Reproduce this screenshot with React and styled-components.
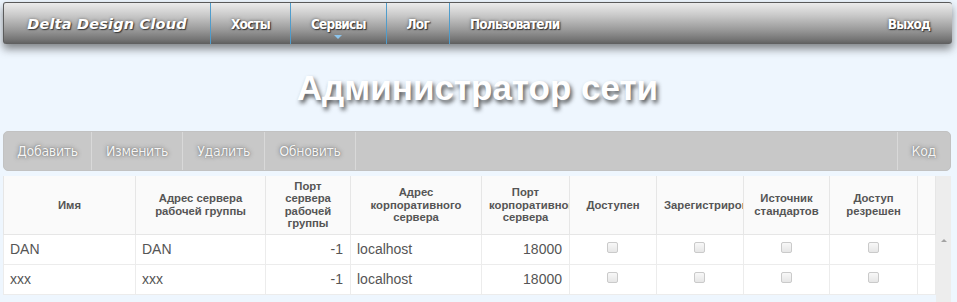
import React from "react";
import styled, { createGlobalStyle } from "styled-components";

const Global = createGlobalStyle`
  html, body { margin: 0; padding: 0; background: #eef6fe; }
  body { font-family: "Liberation Sans", Arial, sans-serif; }
  * { box-sizing: border-box; }
`;

const Page = styled.div`
  padding: 2px 5px 0 3px;
  height: 302px;
  overflow: hidden;
`;

const NavBar = styled.nav`
  position: relative;
  display: flex;
  align-items: stretch;
  height: 42px;
  border-radius: 3px;
  border-top: 1px solid #5a5a5a;
  border-left: 1px solid #5c5c5c;
  background: linear-gradient(180deg, #ececec 0%, #c9c9c9 30%, #9a9a9a 65%, #737373 90%, #5e5e5e 100%);
  box-shadow: 0 5px 9px rgba(40, 40, 40, 0.55);
`;

const Brand = styled.div`
  width: 206px;
  display: flex;
  align-items: center;
  justify-content: center;
  font-family: "DejaVu Sans", Verdana, sans-serif;
  font-weight: bold;
  font-style: italic;
  font-size: 14.5px;
  color: #fff;
  text-shadow: 1px 1px 1px #3a3a3a, 0 0 3px rgba(0,0,0,0.4);
  letter-spacing: 0.2px;
`;

const NavItem = styled.div`
  position: relative;
  display: flex;
  align-items: center;
  padding: 0 ${(p) => p.$pad || 20}px;
  border-left: ${(p) => (p.$sep ? "1px solid #4f9ccb" : "none")};
  margin-left: ${(p) => (p.$right ? "auto" : "0")};
  font-family: "DejaVu Sans Condensed", "Liberation Sans", sans-serif;
  font-stretch: condensed;
  font-weight: bold;
  font-size: 13.5px;
  letter-spacing: -0.8px;
  color: #fff;
  text-shadow: 1px 1px 1px #333, 0 0 3px rgba(0,0,0,0.5);
`;

const Caret = styled.span`
  position: absolute;
  left: 50%;
  bottom: 5px;
  margin-left: -4px;
  width: 0;
  height: 0;
  border-left: 4px solid transparent;
  border-right: 4px solid transparent;
  border-top: 4px solid #8cc4ec;
`;

const Title = styled.h1`
  margin: 0;
  height: 87px;
  padding-top: 22px;
  text-align: center;
  font-family: "Liberation Sans", Arial, sans-serif;
  font-weight: bold;
  font-size: 35px;
  line-height: 44px;
  color: #fff;
  text-shadow: 2px 3px 4px rgba(30, 30, 30, 0.75);
`;

const Toolbar = styled.div`
  display: flex;
  height: 40px;
  width: 948px;
  background: #c8c8c8;
  border-radius: 5px;
  border: 1px solid #c2c2c2;
`;

const ToolButton = styled.div`
  display: flex;
  align-items: center;
  padding: 0 ${(p) => p.$pad || 14}px;
  border-right: ${(p) => (p.$first ? "none" : "1px solid #d9d9d9")};
  border-left: ${(p) => (p.$left ? "1px solid #d9d9d9" : "none")};
  margin-left: ${(p) => (p.$right ? "auto" : "0")};
  font-family: "DejaVu Sans Condensed", "Liberation Sans", sans-serif;
  font-stretch: condensed;
  font-size: 14px;
  letter-spacing: -0.3px;
  color: #f6f6f6;
  text-shadow: 0 0 4px rgba(60, 60, 60, 0.65), 0 0 1px rgba(60,60,60,0.5);
`;

const TableWrap = styled.div`
  display: flex;
  margin-top: 5px;
  width: 948px;
  height: 130px;
`;

const Grid = styled.table`
  table-layout: fixed;
  border-collapse: collapse;
  width: 932px;
  align-self: flex-start;
  color: #555;
`;

const HeadCell = styled.th`
  height: 58px;
  padding: 0 7px;
  background: #fafafa;
  border: 1px solid #e6e6e6;
  border-top: none;
  font-size: 11.3px;
  line-height: 12.5px;
  font-weight: bold;
  color: #555;
  text-align: center;
  vertical-align: middle;
  overflow: hidden;
  white-space: normal;
`;

const Cell = styled.td`
  height: 30px;
  padding: 0 7px 0 6px;
  background: #fff;
  border: 1px solid #ececec;
  font-size: 14px;
  color: #555;
  text-align: ${(p) => p.$align || "left"};
  vertical-align: middle;
  overflow: hidden;
  white-space: nowrap;
`;

const Check = styled.span`
  display: inline-block;
  width: 11px;
  height: 11px;
  margin-top: -6px;
  vertical-align: middle;
  border: 1px solid #cacaca;
  border-radius: 2px;
  background: linear-gradient(180deg, #f8f8f8, #e6e6e6);
`;

const Scrollbar = styled.div`
  position: relative;
  width: 16px;
  background: #ededed;
`;

const ArrowUp = styled.span`
  position: absolute;
  left: 5px;
  top: 63px;
  width: 0;
  height: 0;
  border-left: 3px solid transparent;
  border-right: 3px solid transparent;
  border-bottom: 3px solid #a3a3a3;
`;

const cols = [132, 130, 85, 131, 88, 87, 87, 86, 88, 18];
const headers = [
  "Имя",
  "Адрес сервера рабочей группы",
  "Порт сервера рабочей группы",
  "Адрес корпоративного сервера",
  "Порт корпоративного сервера",
  "Доступен",
  "Зарегистрирован",
  "Источник стандартов",
  "Доступ резрешен",
  "",
];

const rows = [
  { name: "DAN", addr: "DAN", port: "-1", corp: "localhost", cport: "18000" },
  { name: "xxx", addr: "xxx", port: "-1", corp: "localhost", cport: "18000" },
];

export default function App() {
  return (
    <Page>
      <Global />
      <NavBar>
        <Brand>Delta Design Cloud</Brand>
        <NavItem $sep>Хосты</NavItem>
        <NavItem $sep>
          Сервисы
          <Caret />
        </NavItem>
        <NavItem $sep>Лог</NavItem>
        <NavItem $sep>Пользователи</NavItem>
        <NavItem $right $pad={22}>Выход</NavItem>
      </NavBar>
      <Title>Администратор сети</Title>
      <Toolbar>
        <ToolButton $pad={13}>Добавить</ToolButton>
        <ToolButton>Изменить</ToolButton>
        <ToolButton>Удалить</ToolButton>
        <ToolButton>Обновить</ToolButton>
        <ToolButton $right $first $left>Код</ToolButton>
      </Toolbar>
      <TableWrap>
        <Grid>
          <colgroup>
            {cols.map((w, i) => (
              <col key={i} style={{ width: w }} />
            ))}
          </colgroup>
          <thead>
            <tr>
              {headers.map((h, i) => (
                <HeadCell key={i}>{h}</HeadCell>
              ))}
            </tr>
          </thead>
          <tbody>
            {rows.map((r, i) => (
              <tr key={i}>
                <Cell>{r.name}</Cell>
                <Cell>{r.addr}</Cell>
                <Cell $align="right">{r.port}</Cell>
                <Cell>{r.corp}</Cell>
                <Cell $align="right">{r.cport}</Cell>
                <Cell $align="center"><Check /></Cell>
                <Cell $align="center"><Check /></Cell>
                <Cell $align="center"><Check /></Cell>
                <Cell $align="center"><Check /></Cell>
                <Cell />
              </tr>
            ))}
          </tbody>
        </Grid>
        <Scrollbar>
          <ArrowUp />
        </Scrollbar>
      </TableWrap>
    </Page>
  );
}
